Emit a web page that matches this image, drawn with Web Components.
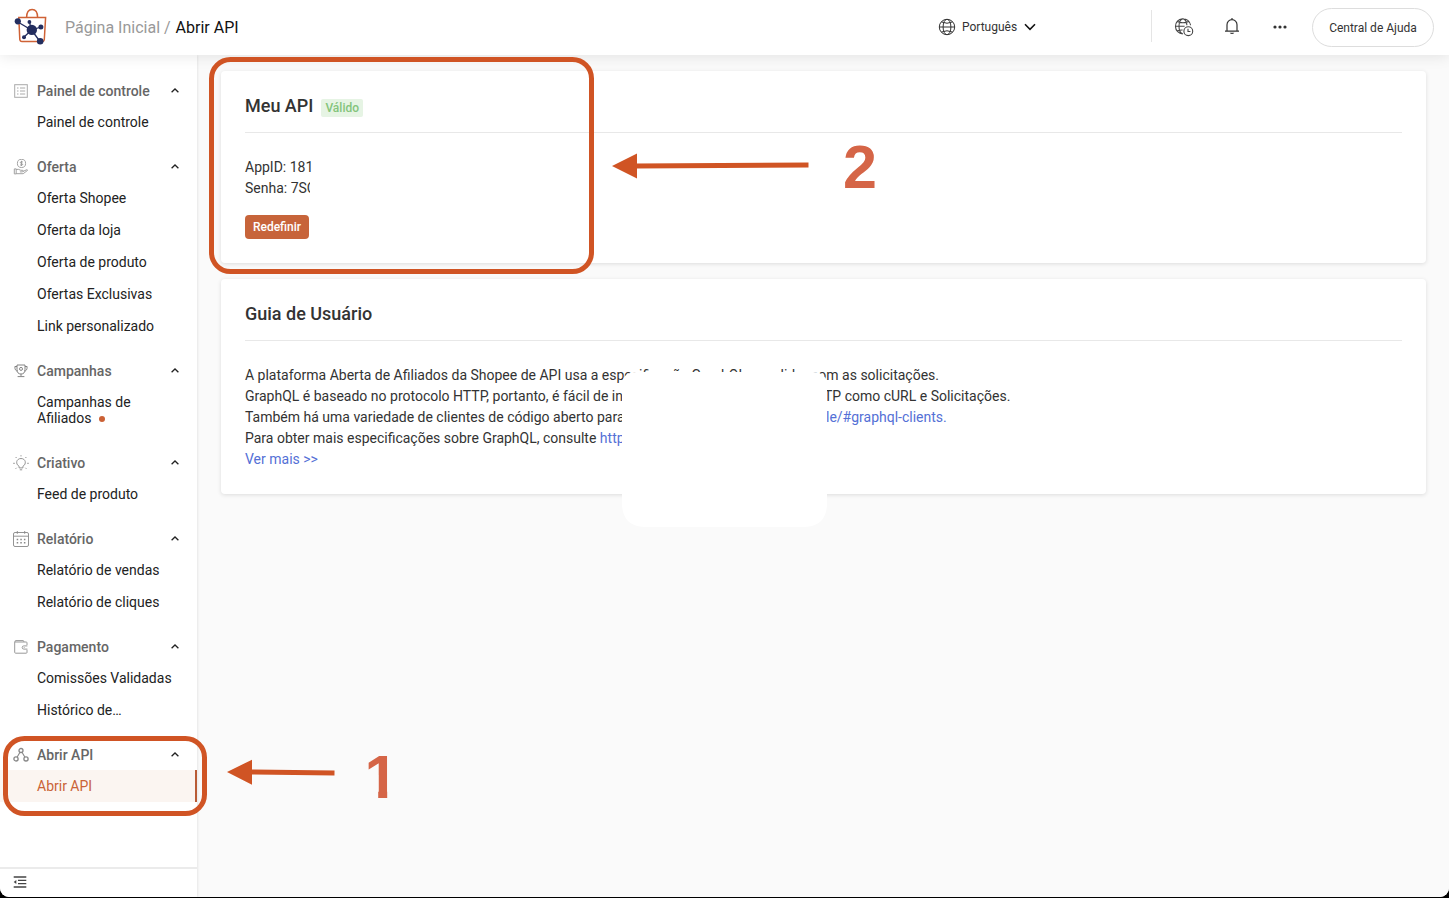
<!DOCTYPE html>
<html lang="pt-BR">
<head>
<meta charset="utf-8">
<title>Abrir API</title>
<style>
  html { background: #000; }
  body {
    margin: 0;
    font-family: Roboto, "Liberation Sans", sans-serif;
    font-size: 14px;
    color: #333;
  }
</style>
</head>
<body>
<affiliate-app></affiliate-app>

<script>
(function () {

  function define(name, html, setup) {
    const template = document.createElement('template');
    template.innerHTML = html;
    customElements.define(name, class extends HTMLElement {
      constructor() {
        super();
        this.attachShadow({ mode: 'open' });
        this.shadowRoot.appendChild(template.content.cloneNode(true));
      }

      connectedCallback() {
        if (setup) setup.call(this, this.shadowRoot);
      }
    });
  }

  // [viewBox width, viewBox height, markup]
  const ICONS = {
    logo: [34, 38, `
      <g fill="none" stroke="#cf6236" stroke-width="1.5">
        <path d="M4.800 10.600h26.800l-1.300 21.900q-.2 1.900-2.200 1.900H8q-2 0-2.200-1.900z"/>
        <path d="M12.600 10.600C12.600 5.200 14.800 2.500 18.100 2.500s5.500 2.700 5.500 8.100"/>
      </g>
      <path d="M3 14.500L17.500 23 26.800 20M15.500 15.300l2 7.700-8 7.500M17.500 23l8.500 11.500" fill="none" stroke="#232e5f" stroke-width="1.300"/>
      <g fill="#232e5f">
        <circle cx="3.800" cy="14.300" r="3.100"/><circle cx="15.400" cy="15" r="1.900"/>
        <circle cx="26.900" cy="19.900" r="2.500"/><circle cx="17.800" cy="22.900" r="5.200"/>
        <circle cx="10" cy="30.300" r="2"/><circle cx="26.200" cy="34.300" r="3.300"/>
      </g>`],
    globe: [18, 18, `<g fill="none" stroke="#333" stroke-width="1">
      <circle cx="9" cy="9" r="7.700"/><ellipse cx="9" cy="9" rx="3.900" ry="7.700"/>
      <path d="M1.300 9h15.400M3.300 3.900q5.700 2.700 11.400 0M3.300 14.100q5.700-2.700 11.400 0"/></g>`],
    region: [20, 20, `<g fill="none" stroke="#444" stroke-width="1.100">
      <path d="M16.600 8.300A7.600 7.600 0 1 0 8.800 16.900M8.800 16.900C3.700 15.500 3.700 3 9 1.700c2.400.7 3.700 3.700 3.900 6.600M1.400 9.300h9.200M3.100 4.600q5.800 2.400 11.800 0M3.200 14q2.600-1.200 5.400-1"/>
      <circle cx="14.300" cy="14.200" r="4.400"/><path d="M14 11.800v2.700h2.400"/></g>`],
    bell: [16, 18, `<g fill="none" stroke="#333" stroke-width="1.200">
      <path d="M3 13.600V7.700a5 5 0 0 1 10 0v5.900M1 14.200h14M8 2.600V1"/></g>
      <path d="M5.700 15.800h4.600q-.8 1.200-2.300 1.200t-2.300-1.200z" fill="#333"/>`],
    more: [14, 4, `<g fill="#333"><circle cx="2" cy="2" r="1.600"/><circle cx="7" cy="2" r="1.600"/><circle cx="12" cy="2" r="1.600"/></g>`],
    down: [12, 8, `<path d="M1 1.300l5 5 5-5" fill="none" stroke="#111" stroke-width="1.600"/>`],
    up: [8, 5, `<path d="M.6 4.300L4 1l3.400 3.300" fill="none" stroke="#222" stroke-width="1.300"/>`],
    dashboard: [16, 16, `<g fill="none" stroke="#aaa" stroke-width="1">
      <rect x="1.700" y="1.700" width="12.600" height="12.600"/>
      <path d="M4 5h1.500M4 8h1.500M4 11h1.500M7 5h5.200M7 8h5.200M7 11h5.200"/></g>`],
    offer: [16, 16, `<g fill="none" stroke="#999" stroke-width=".9">
      <circle cx="8.500" cy="4.400" r="4.100"/>
      <path d="M9.900 3.100q-1.300-.8-2.200-.2c-.9.900 0 1.500.8 1.600s1.700.7.800 1.500q-.9.600-2.300-.2M8.500 1.800v5.200M1.300 9.900h1.900v5H1.300zM3.200 10.400h2.400l2.200.9h2q1 .9-.3 1.600H6.900M9.800 12.500l4-1.800q1 .1.600.8l-4.200 3.200H3.200"/></g>`],
    campaign: [16, 16, `<g fill="none" stroke="#777" stroke-width=".9">
      <path d="M4 2h8v4.600Q12 11 8 11T4 6.600zM4 3.500H1.900Q1.700 8 4.600 8M12 3.500h2.100Q14.300 8 11.400 8M8 11v2M4.600 13.600h6.800"/>
      <circle cx="8" cy="5.900" r="1.500"/></g>`],
    creative: [16, 16, `<g fill="none" stroke="#888" stroke-width=".9">
      <path d="M6.100 12.900v-1.600C2.100 9 3.300 3.500 8 3.500s5.900 5.500 1.900 7.800v1.600zM6.800 14.800h2.400M8 .2v1.200M2.600 2l1 1M13.400 2l-1 1M.2 8.300h1.600M14.200 8.300h1.600M2.600 13.800l1-1M13.400 13.800l-1-1"/></g>`],
    report: [16, 16, `<g fill="none" stroke="#888" stroke-width=".9">
      <rect x=".5" y="1.500" width="15" height="14" rx="1.500"/><path d="M.5 5.200h15M4.300 0v2.800M11.700 0v2.800"/>
      <path d="M3.700 8.500h1.500M7.300 8.500h1.500M10.900 8.500h1.500M3.700 11.800h1.500M7.300 11.800h1.500M10.900 11.800h1.500" stroke-width="1.500"/></g>`],
    payment: [16, 16, `<g fill="none" stroke="#999" stroke-width="1">
      <path d="M14 6V3.800q0-.8-.8-.8H2V2.200q0-.6.700-.6H10q.8 0 .8.800V3M1.700 2.800v10.500q0 .9.900.9h10.600q.8 0 .8-.8v-2.600"/>
      <path d="M14.400 6.900h-3.600a1.600 1.600 0 0 0 0 3.200h3.600"/></g><circle cx="11.200" cy="8.500" r=".6" fill="#aaa"/>`],
    api: [16, 16, `<g fill="none" stroke="#888" stroke-width="1.300">
      <circle cx="8" cy="3.500" r="2"/><circle cx="3" cy="11.900" r="2.100"/><circle cx="13" cy="11.900" r="2.100"/>
      <path d="M7 5.300L4.200 10M9 5.300l2.800 4.700" stroke-width="1.100"/></g>`],
    collapse: [14, 12, `<path d="M.7 1h12.600M5 4.300h8.300M5 7.600h8.300M.7 11h12.600" stroke="#444" stroke-width="1.300"/><path d="M.7 6l2.600-2v4z" fill="#444"/>`]
  };

  define('ui-icon', `
    <style>
      :host { display: block; flex: none; line-height: 0; }
      svg { display: block; }
    </style>
  `, function (root) {
    const [w, h, markup] = ICONS[this.getAttribute('name')];
    root.innerHTML += `<svg width="${w}" height="${h}" viewBox="0 0 ${w} ${h}">${markup}</svg>`;
  });

  define('app-header', `
    <style>
      :host {
        display: flex;
        align-items: center;
        box-sizing: border-box;
        height: 55px;
        padding: 0 15px 0 14px;
        background: #fff;
        box-shadow: 0 1px 14px rgba(0, 0, 0, .1);
        position: relative;
        z-index: 2;
      }
      .logo { margin-top: -3px; }
      .crumbs { margin-left: 17px; font-size: 16px; color: #999; white-space: pre; }
      .crumbs b { font-weight: 400; color: #111; margin-left: 1px; }
      .tools { display: flex; align-items: center; margin-left: auto; font-size: 12px; }
      .lang { display: flex; align-items: center; width: 213px; margin-top: -1px; }
      .lang span { margin: 0 7px 0 6px; }
      .divider { width: 1px; height: 32px; background: #e5e5e5; margin-right: 22px; margin-top: -3px; }
      .region { margin-right: 30px; margin-top: -1px; }
      .bell { margin-right: 33px; margin-top: -3px; }
      .more { margin-right: 25px; margin-top: -1px; }
      .help {
        box-sizing: border-box;
        width: 122px;
        height: 39px;
        border: 1px solid #ddd;
        border-radius: 20px;
        background: #fff;
        font: inherit;
        color: #333;
        padding: 1px 0 0;
      }
    </style>
    <ui-icon class="logo" name="logo"></ui-icon>
    <div class="crumbs">Página Inicial / <b>Abrir API</b></div>
    <div class="tools">
      <div class="lang"><ui-icon name="globe"></ui-icon><span>Português</span><ui-icon name="down"></ui-icon></div>
      <div class="divider"></div>
      <ui-icon class="region" name="region"></ui-icon>
      <ui-icon class="bell" name="bell"></ui-icon>
      <ui-icon class="more" name="more"></ui-icon>
      <button class="help">Central de Ajuda</button>
    </div>
  `);

  define('nav-item', `
    <style>
      :host {
        display: block;
        box-sizing: border-box;
        padding: 8px 12px 8px 37px;
        line-height: 16px;
        color: #222;
      }
      :host([active]) {
        color: #ca6337;
        background: #fbf5f1;
        border-right: 2px solid #b95b35;
      }
      .dot {
        display: none;
        width: 6px;
        height: 6px;
        margin-left: 8px;
        border-radius: 50%;
        background: #cb6135;
        vertical-align: 1px;
      }
      :host([unread]) .dot { display: inline-block; }
    </style>
    <slot></slot><i class="dot"></i>
  `);

  define('nav-group', `
    <style>
      :host { display: block; margin-bottom: 14px; }
      .title {
        display: flex;
        align-items: center;
        height: 30px;
        padding: 0 18px 0 13px;
        font-weight: 500;
        color: #666;
      }
      .title span { flex: 1; margin-left: 8px; }
      .arrow { margin-top: -2px; }
    </style>
    <div class="title"><span></span><ui-icon class="arrow" name="up"></ui-icon></div>
    <slot></slot>
  `, function (root) {
    root.querySelector('span').textContent = this.getAttribute('label');
    const icon = document.createElement('ui-icon');
    icon.setAttribute('name', this.getAttribute('icon'));
    root.querySelector('.title').prepend(icon);
  });

  define('side-nav', `
    <style>
      :host {
        display: flex;
        flex-direction: column;
        width: 197px;
        background: #fff;
        box-shadow: 0 0 3px rgba(0, 0, 0, .14);
      }
      nav { flex: 1; padding-top: 21px; }
      footer {
        display: flex;
        align-items: center;
        box-sizing: border-box;
        height: 30px;
        padding: 0 13px 2px;
        border-top: 2px solid #ebebeb;
      }
    </style>
    <nav>
      <nav-group icon="dashboard" label="Painel de controle">
        <nav-item>Painel de controle</nav-item>
      </nav-group>
      <nav-group icon="offer" label="Oferta">
        <nav-item>Oferta Shopee</nav-item>
        <nav-item>Oferta da loja</nav-item>
        <nav-item>Oferta de produto</nav-item>
        <nav-item>Ofertas Exclusivas</nav-item>
        <nav-item>Link personalizado</nav-item>
      </nav-group>
      <nav-group icon="campaign" label="Campanhas">
        <nav-item unread>Campanhas de<br>Afiliados</nav-item>
      </nav-group>
      <nav-group icon="creative" label="Criativo">
        <nav-item>Feed de produto</nav-item>
      </nav-group>
      <nav-group icon="report" label="Relatório">
        <nav-item>Relatório de vendas</nav-item>
        <nav-item>Relatório de cliques</nav-item>
      </nav-group>
      <nav-group icon="payment" label="Pagamento">
        <nav-item>Comissões Validadas</nav-item>
        <nav-item>Histórico de…</nav-item>
      </nav-group>
      <nav-group icon="api" label="Abrir API">
        <nav-item active>Abrir API</nav-item>
      </nav-group>
    </nav>
    <footer><ui-icon name="collapse"></ui-icon></footer>
  `);

  define('info-card', `
    <style>
      :host {
        display: block;
        padding: 24px;
        background: #fff;
        border-radius: 4px;
        box-shadow: 0 1px 4px rgba(0, 0, 0, .12);
        line-height: 21px;
      }
      header {
        display: flex;
        height: 37px;
        margin-bottom: 24px;
        border-bottom: 1px solid #e8e8e8;
        font-size: 18px;
        font-weight: 500;
      }
    </style>
    <header><slot name="title"></slot></header>
    <slot></slot>
  `);

  define('status-tag', `
    <style>
      :host {
        display: block;
        height: 18px;
        margin: 4px 0 0 8px;
        padding: 0 4px;
        border-radius: 2px;
        background: #e6f4e4;
        color: #84c47c;
        font-size: 12px;
        line-height: 18px;
      }
    </style>
    <slot></slot>
  `);

  define('api-page', `
    <style>
      :host {
        display: flex;
        flex-direction: column;
        gap: 16px;
        flex: 1;
        padding: 16px 23px 0 24px;
        background: #fafafa;
      }
      .value { display: block; white-space: nowrap; }
      .secret { width: 65px; overflow: hidden; }
      .line { display: flex; white-space: pre; }
      .cut { width: 377px; margin-right: 204px; }
      .cut.short { margin-right: 202px; }
      a { color: #5470d6; }
      button {
        display: block;
        width: 64px;
        height: 24px;
        margin-top: 16px;
        padding: 0;
        border: 0;
        border-radius: 4px;
        background: #c7643a;
        color: #fff;
        font: 500 12px Roboto, sans-serif;
      }
    </style>
    <info-card>
      <span slot="title">Meu API</span><status-tag slot="title">Válido</status-tag>
      <span class="value">AppID: 181</span>
      <span class="value secret">Senha: 7SC</span>
      <button>Redefinir</button>
    </info-card>
    <info-card>
      <span slot="title">Guia de Usuário</span>
      <div class="line">A plataforma Aberta de Afiliados da Shopee de API usa a especificação GraphQL para lidar com as solicitações.</div>
      <div class="line"><span class="cut short">GraphQL é baseado no protocolo HTTP, portanto, é fácil de in</span><span>TP como cURL e Solicitações.</span></div>
      <div class="line"><span class="cut">Também há uma variedade de clientes de código aberto para</span><a>le/#graphql-clients.</a></div>
      <div class="line"><span class="cut">Para obter mais especificações sobre GraphQL, consulte <a>http</a></span></div>
      <div class="line"><a>Ver mais &gt;&gt;</a></div>
    </info-card>
  `);

  // Tutorial marks drawn freely over the page
  define('tutorial-marks', `
    <style>
      :host { position: absolute; inset: 0; z-index: 3; pointer-events: none; }
      svg { display: block; }
      text { font: bold 61px "Liberation Sans", sans-serif; fill: #d56547; }
    </style>
    <svg width="1449" height="897" viewBox="0 0 1449 897">
      <defs><clipPath id="stem"><path d="M360 745h27.200v60h-9v-30H360z"/></clipPath></defs>
      <path d="M622 386q0-14 14-14h177q14 0 14 14v117q0 24-24 24H646q-24 0-24-24z" fill="#fff"/>
      <g fill="none" stroke="#d05424" stroke-width="5">
        <rect x="211.500" y="59.500" width="380" height="212" rx="19"/>
        <rect x="5.500" y="738.500" width="199" height="75" rx="19"/>
        <path d="M636 166l172.500-1M251 772l83.500 1"/>
      </g>
      <g fill="#d05424">
        <path d="M612 166l25-12.500v25zM227 772l25-12.300v25z"/>
      </g>
      <text x="843" y="188">2</text>
      <text x="364.600" y="798" clip-path="url(#stem)">1</text>
    </svg>
  `);

  define('affiliate-app', `
    <style>
      :host {
        display: flex;
        flex-direction: column;
        position: relative;
        height: 897px;
        overflow: hidden;
        background: #fafafa;
        border-radius: 0 0 9px 9px;
      }
      .body { display: flex; flex: 1; }
      side-nav { position: relative; z-index: 1; }
    </style>
    <app-header></app-header>
    <div class="body">
      <side-nav></side-nav>
      <api-page></api-page>
    </div>
    <tutorial-marks></tutorial-marks>
  `);

})();
</script>
</body>
</html>
